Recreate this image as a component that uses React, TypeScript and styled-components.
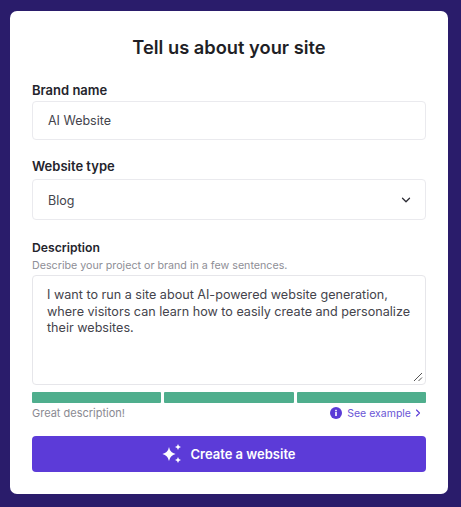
import styled, { createGlobalStyle } from "styled-components";
import { ChevronDown, ChevronRight } from "lucide-react";

const GlobalStyle = createGlobalStyle`
  html, body {
    margin: 0;
    padding: 0;
    background: #2a1c6b;
  }
  * {
    box-sizing: border-box;
  }
`;

const App = () => {
  return (
    <Page>
      <GlobalStyle />
      <Card>
        <Title>Tell us about your site</Title>
        <BrandField>
          <Label>Brand name</Label>
          <TextBox $height={39}>AI Website</TextBox>
        </BrandField>
        <TypeField>
          <Label>Website type</Label>
          <TextBox $height={41}>
            <SelectValue>Blog</SelectValue>
            <ChevronDown size={14} strokeWidth={2.2} color="#2d2d35" />
          </TextBox>
        </TypeField>
        <DescriptionField>
          <Label $size={12.2}>Description</Label>
          <Hint>Describe your project or brand in a few sentences.</Hint>
          <TextArea>
            I want to run a site about AI-powered website generation, where visitors can learn how to easily create and
            personalize their websites.
            <Grip width="10" height="10" viewBox="0 0 10 10">
              <path d="M1 9 L9 1 M5.5 9 L9 5.5" stroke="#555" strokeWidth="1" fill="none" />
            </Grip>
          </TextArea>
        </DescriptionField>
        <Meter>
          <MeterBar />
          <MeterBar />
          <MeterBar />
        </Meter>
        <FeedbackRow>
          <Feedback>Great description!</Feedback>
          <ExampleLink>
            <svg width="12" height="12" viewBox="0 0 12 12">
              <circle cx="6" cy="6" r="6" fill="#5a3bd6" />
              <rect x="5.2" y="5" width="1.6" height="4" fill="#fff" />
              <rect x="5.2" y="2.8" width="1.6" height="1.5" fill="#fff" />
            </svg>
            <ExampleText>See example</ExampleText>
            <ChevronRight size={12} strokeWidth={2.2} color="#5a3bd6" />
          </ExampleLink>
        </FeedbackRow>
        <CreateButton>
          <svg width="20" height="20" viewBox="0 0 20 20" fill="#fff">
            <path d="M7 3 Q8 8.6 13.6 10 Q8 11.4 7 17 Q6 11.4 0.4 10 Q6 8.6 7 3 Z" />
            <path d="M16 0 Q16.4 2.6 19 3 Q16.4 3.4 16 6 Q15.6 3.4 13 3 Q15.6 2.6 16 0 Z" />
            <path d="M16 13 Q16.4 15.6 19 16 Q16.4 16.4 16 19 Q15.6 16.4 13 16 Q15.6 15.6 16 13 Z" />
          </svg>
          Create a website
        </CreateButton>
      </Card>
    </Page>
  );
};

export default App;

const Page = styled.div`
  width: 461px;
  height: 507px;
  padding: 11px 13px 13px 10px;
  background: #2a1c6b;
  font-family: "Inter", "Liberation Sans", sans-serif;
  overflow: hidden;
`;

const Card = styled.div`
  display: flex;
  flex-direction: column;
  width: 438px;
  height: 483px;
  padding: 25px 22px 0;
  border-radius: 7px;
  background: #ffffff;
`;

const Title = styled.h1`
  margin: 0;
  height: 22px;
  font-size: 18.3px;
  line-height: 22px;
  font-weight: 600;
  text-align: center;
  color: #1f1f26;
`;

const BrandField = styled.div`
  display: flex;
  flex-direction: column;
  gap: 3px;
  margin-top: 24px;
`;

const TypeField = styled(BrandField)`
  gap: 5px;
  margin-top: 18px;
`;

const DescriptionField = styled.div`
  display: flex;
  flex-direction: column;
  margin-top: 20px;
`;

const Label = styled.div<{ $size?: number }>`
  height: 16px;
  font-size: ${(p) => p.$size ?? 13}px;
  line-height: 16px;
  font-weight: 600;
  color: #24242c;
`;

const Hint = styled.div`
  height: 16px;
  margin-top: 2px;
  margin-bottom: 1px;
  font-size: 10.7px;
  line-height: 16px;
  color: #8e8e96;
`;

const TextBox = styled.div<{ $height: number }>`
  display: flex;
  align-items: center;
  justify-content: space-between;
  height: ${(p) => p.$height}px;
  padding: 0 12px 0 15px;
  border: 1px solid #eaeaee;
  border-radius: 4px;
  font-size: 12.5px;
  color: #44444c;
`;

const SelectValue = styled.span`
  padding-top: 2px;
`;

const TextArea = styled.div`
  position: relative;
  height: 110px;
  padding: 11px 5px 0 14px;
  border: 1px solid #e6e6ea;
  border-radius: 4px;
  font-size: 12.6px;
  line-height: 16.5px;
  color: #44444c;
`;

const Grip = styled.svg`
  position: absolute;
  right: 2px;
  bottom: 2px;
`;

const Meter = styled.div`
  display: grid;
  grid-template-columns: repeat(3, 1fr);
  gap: 3px;
  margin-top: 7px;
`;

const MeterBar = styled.div`
  height: 11px;
  background: #4fae8d;
  border-radius: 1px;
`;

const FeedbackRow = styled.div`
  display: flex;
  align-items: center;
  justify-content: space-between;
  height: 16px;
  margin-top: 2px;
  padding-right: 2px;
`;

const Feedback = styled.span`
  font-size: 11px;
  color: #8a8a92;
`;

const ExampleLink = styled.span`
  display: flex;
  align-items: center;
  gap: 5px;
`;

const ExampleText = styled.span`
  margin-right: -4px;
  font-size: 10.5px;
  color: #6a55d6;
`;

const CreateButton = styled.div`
  display: flex;
  align-items: center;
  justify-content: center;
  gap: 8px;
  height: 36px;
  margin-top: 15px;
  border-radius: 4px;
  background: #5c3bd8;
  font-size: 13px;
  font-weight: 600;
  color: #ffffff;
`;
